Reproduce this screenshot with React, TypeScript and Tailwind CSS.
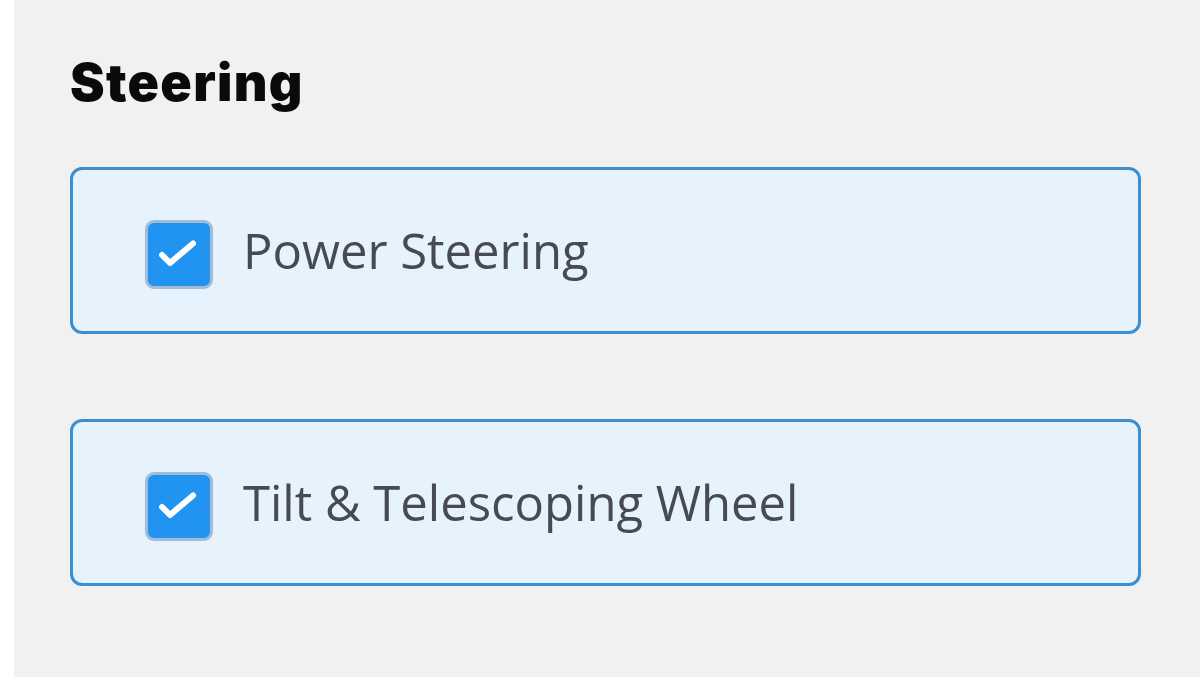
import React, { useState } from 'react';

type Option = { id: string; label: string };

const OPTIONS: Option[] = [
  { id: 'power', label: 'Power Steering' },
  { id: 'tilt', label: 'Tilt & Telescoping Wheel' },
];

function CheckBox({ checked }: { checked: boolean }) {
  return (
    <span className="mt-[8px] flex h-[69px] w-[68px] shrink-0 items-center justify-center rounded-[9px] border-[3px] border-[#a3bcd6] bg-[#2193f1]">
      {checked && (
        <svg width="62" height="63" viewBox="0 0 62 63" fill="none">
          <path
            d="M14 32 L22 40 L45 20.5"
            stroke="white"
            strokeWidth="6"
            strokeLinecap="round"
            strokeLinejoin="round"
          />
        </svg>
      )}
    </span>
  );
}

export default function App() {
  const [checked, setChecked] = useState<Record<string, boolean>>({ power: true, tilt: true });

  return (
    <div className="flex h-[677px] w-full overflow-hidden bg-white">
      <div className="w-[14px] shrink-0 bg-white" />
      <div className="flex-1 bg-[#f1f1f1] pl-[56px] pr-[59px] pt-[57px]">
        <h2 className="font-['Inter',sans-serif] text-[52px] font-black leading-none tracking-[0.025em] text-[#0a0a0a]">
          Steering
        </h2>

        <div className="mt-[58px] flex flex-col gap-[85px]">
          {OPTIONS.map((opt) => (
            <label
              key={opt.id}
              className="flex h-[167px] cursor-pointer items-center gap-[30px] rounded-[12px] border-[3px] border-[#3d8ecf] bg-[#e6f3fd] pl-[72px]"
              onClick={() => setChecked((prev) => ({ ...prev, [opt.id]: !prev[opt.id] }))}
            >
              <CheckBox checked={!!checked[opt.id]} />
              <span className="font-['Open_Sans',sans-serif] text-[49px] leading-none text-[#474b51]">
                {opt.label}
              </span>
            </label>
          ))}
        </div>
      </div>
    </div>
  );
}
